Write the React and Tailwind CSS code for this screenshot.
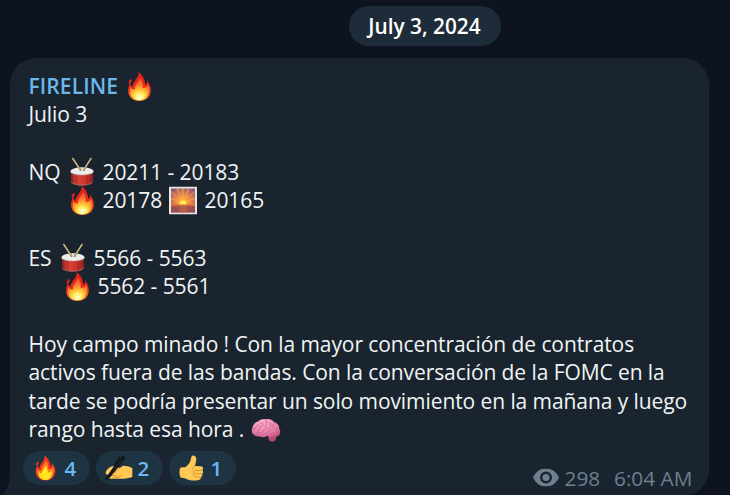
import React, { useId } from "react";

function Fire({ className, flat = false }) {
  const id = useId();
  return (
    <svg viewBox="0 0 24 30" className={className}>
      <defs>
        <radialGradient id={id} gradientUnits="userSpaceOnUse" cx="12" cy="26" r="23">
          <stop offset="0" stopColor="#fffde0" />
          <stop offset=".18" stopColor="#fff06a" />
          <stop offset=".36" stopColor="#ffb92e" />
          <stop offset=".58" stopColor="#fb7434" />
          <stop offset="1" stopColor="#ee3226" />
        </radialGradient>
        <linearGradient id={`${id}o`} x1="0" y1="0" x2="0" y2="1">
          <stop offset="0" stopColor="#d91d16" />
          <stop offset=".6" stopColor="#ef2f1a" />
          <stop offset="1" stopColor="#ff8a2a" />
        </linearGradient>
      </defs>
      <path
        fill={flat ? "#f3331f" : `url(#${id}o)`}
        d="M11.3 .5C14.8 3.5 17.8 8 17.7 13.4C19.3 12.8 20.2 10.5 19.7 8.3C21 12 24 15 23.3 20C22.4 26 18.2 29.5 12 29.5C5.5 29.5 1 25.5.6 19.7C.5 16.7 1.3 14 2.7 11.7C3.3 13.3 4 14.8 5.2 15.4C4.7 10 10.7 8.5 11.3 .5ZM3.7 7.6C4.2 8 4.4 9 4 10C3.5 11.1 2.2 12.5 1.5 12.7C.7 11 1.2 8.7 3.7 7.6Z"
      />
      <path
        fill={flat ? "#ff801e" : `url(#${id})`}
        d="M12.2 6C14.8 9 15.6 12 15.2 16.3C18 16.8 20.2 15.3 20.7 13.3C21.8 16 22.2 18.8 21 21.8C19.7 26 16.5 28.8 12 28.8C7 28.8 3.4 25.6 2.7 21.2C2.3 19 2.4 17.4 2.9 15.8C4.2 18 6.4 18.5 7.8 17.6C6.6 12.7 11.8 11.3 12.2 6Z"
      />
      {flat && (
        <path fill="#ffe51d" d="M11.9 12C14.3 15 14.1 18.4 15.9 20.5C17.5 20.3 18.7 18.8 19.2 17.6C20.5 22.5 18 28.7 12 28.9C6.4 28.8 3.5 24.5 4.4 19C5.3 20.4 6.5 21.5 8 21.2C7.7 17.8 11.2 15.7 11.9 12Z" />
      )}
    </svg>
  );
}

function Drum({ className }) {
  const id = useId();
  return (
    <svg viewBox="0 0 26 30" className={className}>
      <defs>
        <linearGradient id={id}>
          <stop offset="0" stopColor="#8e2421" />
          <stop offset=".3" stopColor="#de4238" />
          <stop offset=".7" stopColor="#cb302a" />
          <stop offset="1" stopColor="#8f211f" />
        </linearGradient>
      </defs>
      <path d="M2 14V25C4 29.6 22 29.6 24 25V14Z" fill={`url(#${id})`} />
      <path d="M1.9 25C5 29.2 21 29.2 24.1 25" fill="none" stroke="#a5817f" strokeWidth=".7" />
      <path d="M3 17V26M8 18.5V28M18 18.5V28M23 17V26" stroke="#6f2826" strokeWidth=".6" />
      <path d="M1.5 14V15.2C4 19.4 22 19.4 24.5 15.2V14Z" fill="#b9a19f" />
      <ellipse cx="13" cy="14" rx="11.5" ry="3.7" fill="#eeeeeb" />
      <path d="M3.9 1.6L11.5 13M22 1.6L14.8 13" stroke="#6d5a3a" strokeWidth="1.9" strokeLinecap="round" />
      <path d="M3.7 1.4L11.3 12.8M22 1.4L14.8 12.8" stroke="#d6c08f" strokeWidth="1.2" strokeLinecap="round" />
    </svg>
  );
}

function Sunrise({ className }) {
  const id = useId();
  return (
    <svg viewBox="0 0 28 28" className={className}>
      <defs>
        <radialGradient id={id} gradientUnits="userSpaceOnUse" cx="14" cy="16" r="17">
          <stop offset="0" stopColor="#fff36d" />
          <stop offset=".22" stopColor="#ffa93c" />
          <stop offset=".55" stopColor="#e27c50" />
          <stop offset="1" stopColor="#7e5478" />
        </radialGradient>
      </defs>
      <rect width="28" height="28" rx=".8" fill="#e9e6e8" />
      <rect x="2" y="2" width="24" height="24" fill={`url(#${id})`} />
      <path d="M14 16L2 4V6ZM14 16L7 2H9ZM14 16L13 2H15ZM14 16L19 2H21ZM14 16L26 4V6ZM14 16L2 11V13ZM14 16L26 11V13Z" fill="#ffb85c" opacity=".45" />
      <path d="M2 18H26V26H2Z" fill="#8c4652" opacity=".8" />
      <path d="M2 17.6H26V19.6H2Z" fill="#dd6f38" />
      <path d="M11 18H17L18 26H10Z" fill="#c9683f" opacity=".55" />
      <path d="M10.4 18A3.6 3.4 0 0 1 17.6 18Z" fill="#fff05a" />
    </svg>
  );
}

function Brain({ className }) {
  const id = useId();
  return (
    <svg viewBox="0 0 30 25" className={className}>
      <defs>
        <radialGradient id={id} cx=".4" cy=".25" r=".8">
          <stop offset="0" stopColor="#f8a9c5" />
          <stop offset=".65" stopColor="#e880a8" />
          <stop offset="1" stopColor="#c45580" />
        </radialGradient>
      </defs>
      <path d="M17 18C17 22 19 24 22 23.5C25 23 26 20 24 18Z" fill="#ad4d6e" />
      <path
        fill={`url(#${id})`}
        d="M3 16.8C.6 15.5.3 12.5 1.3 10.2C1.6 6.7 4 4 7 3.4C9.5.7 13 .6 15 1.2C18.5.6 21.5 1.8 23 4C26.7 5 28.6 8 28.3 11C30.5 14 29 18.2 25.5 18.8C22.5 20.2 18.8 19.6 16.5 17.7C13.5 19.7 10.4 19.8 8 18.2C6 18.7 4.2 18.3 3 16.8Z"
      />
      <path
        fill="none"
        stroke="#c25a86"
        strokeWidth=".7"
        strokeLinecap="round"
        d="M3 12C4 8.5 6 9 7 6.5M7 14C6 10.5 10 11 9 8M9.5 5C13 3.5 12.5 8 10.8 9.2M14 2.5C17 4 15 7 14 9M18 3.2C21 5 18.5 7.2 19.8 9M22.7 6C20 9 24 9.7 24.5 12M27 10C24 11 25 14 27 15M4.5 16C6.5 13.5 10 16 12 13C13.2 10.5 16.2 12 17.3 9.5M10 17C12 14.5 15.5 16.5 17 13.5C19 11.5 20.5 13 22 11M17 17C19 14 22 16.5 23.5 14.2"
      />
      <path d="M9 4.3C11 2.3 13 2.2 14 2.6M4 8C4.3 6.3 6 5.5 7 5.6M17 2.5L20 3.5" stroke="#ffc4d6" strokeWidth=".8" fill="none" />
    </svg>
  );
}

function WritingHand({ className }) {
  return (
    <svg viewBox="0 0 28 26" className={className}>
      <path
        fill="#ffc756"
        d="M1 16.5C3 12.5 6.5 10.5 10 11.4L14.8 13L18 10.8C22 10.7 25.3 12 27.3 13V22C24 23.2 20.5 23.8 16.5 23.8L6 23.8C3.3 23.6 3.2 20.8 5 20L2.3 19.8C.6 19.5.2 18 1 16.5Z"
      />
      <path d="M14.6 13C12.8 15.2 11.5 16.6 9.6 17.4M5 20.4L11 20.5M8 23.2C12 22.5 15 22 17 20" stroke="#d98c2f" strokeWidth=".9" fill="none" strokeLinecap="round" />
      <path d="M.8 22L3.2 19.4L14.3 3.8C16 1.6 17.9 0 19.3 .9C20.8 2 19.2 4.8 17.3 7.2L5.4 22L.6 25.6Z" fill="#11171c" />
      <path d="M14.4 2.4L9.8 9.6" stroke="#11171c" strokeWidth="1.5" strokeLinecap="round" />
      <path d="M16.2 5.2L9 14.6" stroke="#3b454d" strokeWidth=".5" />
    </svg>
  );
}

function ThumbsUp({ className }) {
  return (
    <svg viewBox="0 0 25 26" className={className}>
      <path
        fill="#ffc956"
        d="M1 13.3C2.5 11.8 4 12.5 6 12.2C8.5 10.8 10.8 8 11.7 5C12 2 12.7.4 14.4.5C17.2.7 17.8 3.8 16.9 7L15.9 11L22 11.2C24.3 11.5 24.8 14.2 23.2 15.2C24.7 16 24.4 18.3 22.9 18.8C24 20 23.3 21.8 21.9 22.1C22.3 23.8 21 25 19 25.2C14 25.8 9.5 25.4 6.5 23.4L1.5 22.5C.3 19.5.2 16 1 13.3Z"
      />
      <path d="M15.8 11.2C14.5 11.7 13.6 12.6 13.4 13.5M23 15.1C20.8 15.8 18.3 15.6 16.2 15.1M22.8 18.7C20 19.3 18 18.9 16.2 18.3M21.9 22C19.6 22.5 18 22.2 16.4 21.7M15 15C13.8 17 14 19 15.7 21.8" stroke="#d68f36" strokeWidth=".9" fill="none" strokeLinecap="round" />
    </svg>
  );
}

function Eye({ className }) {
  return (
    <svg viewBox="0 0 26 18" className={className}>
      <path fill="#6d7f8f" fillRule="evenodd" d="M0 9C2.5 3.3 7.3 0 13 0S23.5 3.3 26 9C23.5 14.7 18.7 18 13 18S2.5 14.7 0 9ZM13 3A6 6 0 1 0 13 15A6 6 0 0 0 13 3Z" />
      <circle cx="13" cy="9" r="3.5" fill="#6d7f8f" />
    </svg>
  );
}

function Line({ children }) {
  return <div className="flex h-[28.65px] items-center whitespace-pre">{children}</div>;
}

function Reaction({ icon, count }) {
  return (
    <div className="flex h-[34px] w-[66.5px] items-center rounded-full bg-[#1e3442] text-[20.5px] font-semibold text-[#6cb8f4]">
      <span className="flex w-[41.5px] shrink-0 items-center pl-[9px]">{icon}</span>
      <span className="translate-y-px">{count}</span>
    </div>
  );
}

export default function App() {
  return (
    <div className="h-[495px] w-[730px] overflow-hidden bg-[#0d131f] pt-[6px] font-['Open_Sans',sans-serif] text-[21px] text-[#f0f4f5]">
      <div className="ml-[349px] flex h-10 w-[152px] items-center justify-center rounded-full bg-[#1e2b38] pr-px pt-px text-[20.8px] font-semibold text-white">
        July 3, 2024
      </div>
      <div className="relative ml-[10px] mt-3 h-[438px] w-[699px] rounded-[26px] rounded-bl-none bg-[#19242f] pl-[18.5px] pt-[14.2px] tracking-[-0.08px]">
        <svg viewBox="0 0 10 20" className="absolute -left-[10px] bottom-0 h-5 w-[10px]">
          <path d="M10 0C9.5 10 6 16 0 20H10Z" fill="#19242f" />
        </svg>
        <Line>
          <span className="w-[98px] font-semibold tracking-[0.12px] text-[#6ab8ea]">FIRELINE</span>
          <Fire className="h-[30px] w-[25px] -translate-y-[0.5px]" />
        </Line>
        <Line>Julio 3</Line>
        <Line />
        <Line>
          <span className="w-[40.5px]">NQ</span>
          <Drum className="mr-[7.5px] h-[30px] w-[26px]" />
          20211 - 20183
        </Line>
        <Line>
          <span className="w-[41px]" />
          <Fire className="mr-[8px] h-[30px] w-[25px] -translate-y-[0.5px]" />
          <span className="w-[66px]">20178</span>
          <Sunrise className="mr-[8px] h-7 w-7 -translate-y-[0.5px]" />
          20165
        </Line>
        <Line />
        <Line>
          <span className="w-[31.5px]">ES</span>
          <Drum className="mr-[7.5px] h-[30px] w-[26px]" />
          5566 - 5563
        </Line>
        <Line>
          <span className="w-[36px]" />
          <Fire className="mr-[8px] h-[30px] w-[25px] -translate-y-[0.5px]" />
          5562 - 5561
        </Line>
        <Line />
        <Line>Hoy campo minado ! Con la mayor concentración de contratos</Line>
        <Line>activos fuera de las bandas. Con la conversación de la FOMC en la</Line>
        <Line>tarde se podría presentar un solo movimiento en la mañana y luego</Line>
        <Line>
          <span className="w-[222px]">rango hasta esa hora .</span>
          <Brain className="h-[25px] w-[30px]" />
        </Line>
        <div className="-ml-[5.5px] mt-[6.3px] flex gap-[6.5px] tracking-normal">
          <Reaction icon={<Fire flat className="ml-[3px] h-[26px] w-[21px]" />} count="4" />
          <Reaction icon={<WritingHand className="h-[26px] w-[28px]" />} count="2" />
          <Reaction icon={<ThumbsUp className="ml-px h-[26px] w-[25px]" />} count="1" />
          <div className="ml-[290.5px] flex h-[34px] translate-y-[10.5px] items-center text-[20.8px] text-[#6d7f8f]">
            <Eye className="mr-[6px] h-[18px] w-[26px] -translate-y-px" />
            <span className="w-[49.5px]">298</span>
            <span className="whitespace-nowrap">6:04 AM</span>
          </div>
        </div>
      </div>
    </div>
  );
}
